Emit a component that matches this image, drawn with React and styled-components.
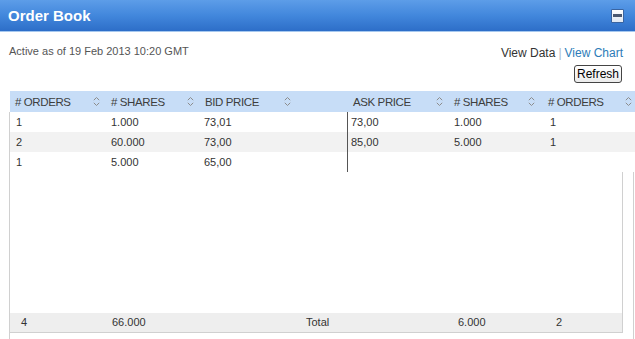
import React from 'react';
import styled, { createGlobalStyle } from 'styled-components';

const GlobalStyle = createGlobalStyle`
  html, body {
    margin: 0;
    padding: 0;
    background: #ffffff;
  }
  body {
    font-family: "Liberation Sans", Arial, sans-serif;
  }
`;

const COLS = '96px 95px 146px 101px 96px 96px';

const Panel = styled.div`
  width: 635px;
  height: 339px;
  overflow: hidden;
  display: flex;
  flex-direction: column;
  background: #fff;
`;

const TitleBar = styled.div`
  height: 33px;
  display: flex;
  align-items: center;
  justify-content: space-between;
  padding: 0 11px 0 8px;
  background: linear-gradient(to bottom, #5d9de8 0%, #4287dc 50%, #2d6ec8 100%);
  border-bottom: 1px solid #a6c8ef;
`;

const Title = styled.h1`
  margin: 0;
  font-size: 15px;
  font-weight: bold;
  color: #ffffff;
`;

const MinButton = styled.button`
  width: 13px;
  height: 14px;
  padding: 0;
  border: 1px solid #3a64a0;
  border-radius: 1px;
  background: linear-gradient(to bottom, #ffffff, #dfe7f2);
  display: flex;
  align-items: center;
  justify-content: center;
  cursor: pointer;

  &::before {
    content: '';
    width: 9px;
    height: 3px;
    background: #4b5870;
  }
`;

const Info = styled.div`
  display: flex;
  justify-content: space-between;
  align-items: flex-start;
  padding: 12px 13px 0 9px;
`;

const Stamp = styled.div`
  font-size: 11px;
  line-height: 14px;
  color: #555;
`;

const Controls = styled.div`
  display: flex;
  flex-direction: column;
  align-items: flex-end;
  gap: 5px;
`;

const Links = styled.div`
  margin-top: 2px;
  font-size: 12px;
  line-height: 14px;
  color: #333;
  margin-right: -1px;
`;

const Link = styled.a`
  color: ${(p) => (p.$active ? '#333' : '#2d7cb8')};
  text-decoration: none;
  cursor: pointer;
`;

const Sep = styled.span`
  color: #aab8c8;
  margin: 0 3px;
`;

const RefreshButton = styled.button`
  height: 18px;
  padding: 0 2px;
  font-family: "Liberation Sans", Arial, sans-serif;
  font-size: 12px;
  color: #000;
  background: linear-gradient(to bottom, #ffffff, #ececec);
  border: 1px solid #444;
  border-radius: 3px;
  cursor: pointer;
`;

const Grid = styled.div`
  margin-top: 8px;
  margin-left: 10px;
  display: flex;
  flex-direction: column;
`;

const HeadRow = styled.div`
  display: grid;
  grid-template-columns: ${COLS};
  height: 21px;
  background: #c7ddf7;
`;

const HeadCell = styled.div`
  display: flex;
  align-items: center;
  justify-content: space-between;
  padding-left: ${(p) => p.$pl}px;
  padding-right: ${(p) => p.$pr}px;
  font-size: 11.5px;
  letter-spacing: -0.4px;
  color: #3d3d3d;
  text-transform: uppercase;
  white-space: nowrap;
`;

const Body = styled.div`
  border-left: 1px solid #d0d0d0;
  margin-left: -1px;
`;

const Row = styled.div`
  display: grid;
  grid-template-columns: ${COLS};
  height: 20px;
  background: ${(p) => (p.$alt ? '#f2f2f2' : '#ffffff')};
`;

const Cell = styled.div`
  padding-left: ${(p) => p.$pl}px;
  font-size: 11px;
  line-height: 20px;
  color: #333;
  border-left: ${(p) => (p.$divider ? '1px solid #555' : 'none')};
`;

const Lower = styled.div`
  display: flex;
  height: 167px;
`;

const LowerMain = styled.div`
  width: 612px;
  display: flex;
  flex-direction: column;
  border-right: 1px solid #d0d0d0;
  height: 161px;
`;

const Filler = styled.div`
  height: 141px;
`;

const Footer = styled.div`
  display: grid;
  grid-template-columns: 96px 95px 99px 152px 98px 1fr;
  height: 19px;
  background: #eeeeee;
  border-bottom: 1px solid #d0d0d0;
  margin-left: -1px;
  border-left: 1px solid #d0d0d0;
`;

const FootCell = styled.div`
  padding-left: ${(p) => p.$pl}px;
  font-size: 11px;
  line-height: 19px;
  color: #333;
`;

const EdgeLine = styled.div`
  margin-left: 10px;
  width: 1px;
  background: #d0d0d0;
`;

const SortIcon = () => (
  <svg width="7" height="11" viewBox="0 0 7 11" fill="none" stroke="#8c8c8c" strokeWidth="1">
    <path d="M0.8 4.2 L3.5 1.5 L6.2 4.2" />
    <path d="M0.8 6.8 L3.5 9.5 L6.2 6.8" />
  </svg>
);

const headers = [
  { label: '# Orders', pl: 5, pr: 6 },
  { label: '# Shares', pl: 5, pr: 7 },
  { label: 'Bid Price', pl: 4, pr: 56 },
  { label: 'Ask Price', pl: 6, pr: 5 },
  { label: '# Shares', pl: 6, pr: 9 },
  { label: '# Orders', pl: 4, pr: 8 },
];

const cellPad = [6, 5, 3, 3, 6, 6];

const rows = [
  ['1', '1.000', '73,01', '73,00', '1.000', '1'],
  ['2', '60.000', '73,00', '85,00', '5.000', '1'],
  ['1', '5.000', '65,00', '', '', ''],
];

const totals = [
  { v: '4', pl: 11 },
  { v: '66.000', pl: 6 },
  { v: '', pl: 0 },
  { v: 'Total', pl: 6 },
  { v: '6.000', pl: 6 },
  { v: '2', pl: 6 },
];

export default function App() {
  return (
    <>
      <GlobalStyle />
      <Panel>
        <TitleBar>
          <Title>Order Book</Title>
          <MinButton aria-label="Minimize" />
        </TitleBar>
        <Info>
          <Stamp>Active as of 19 Feb 2013 10:20 GMT</Stamp>
          <Controls>
            <Links>
              <Link $active>View Data</Link>
              <Sep>|</Sep>
              <Link>View Chart</Link>
            </Links>
            <RefreshButton>Refresh</RefreshButton>
          </Controls>
        </Info>
        <Grid>
          <HeadRow>
            {headers.map((h, i) => (
              <HeadCell key={i} $pl={h.pl} $pr={h.pr}>
                <span>{h.label}</span>
                <SortIcon />
              </HeadCell>
            ))}
          </HeadRow>
          <Body>
            {rows.map((r, i) => (
              <Row key={i} $alt={i % 2 === 1}>
                {r.map((v, j) => (
                  <Cell key={j} $pl={cellPad[j]} $divider={j === 3}>
                    {v}
                  </Cell>
                ))}
              </Row>
            ))}
            <Lower>
              <LowerMain>
                <Filler />
                <Footer>
                  {totals.map((t, i) => (
                    <FootCell key={i} $pl={t.pl}>
                      {t.v}
                    </FootCell>
                  ))}
                </Footer>
              </LowerMain>
              <EdgeLine />
            </Lower>
          </Body>
        </Grid>
      </Panel>
    </>
  );
}
